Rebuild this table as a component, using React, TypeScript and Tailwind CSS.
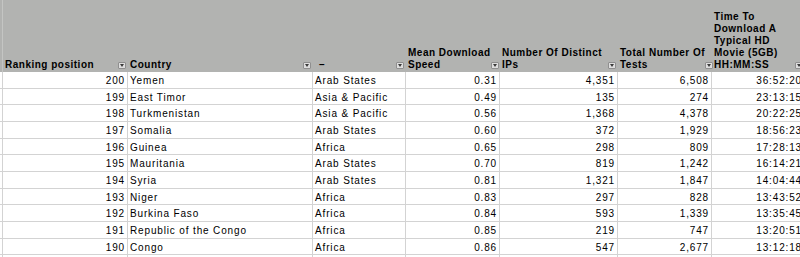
import type { ReactNode } from 'react'

type Row = [string, string, string, string, string, string, string]

const rows: Row[] = [
  ['200', 'Yemen', 'Arab States', '0.31', '4,351', '6,508', '36:52:20'],
  ['199', 'East Timor', 'Asia & Pacific', '0.49', '135', '274', '23:13:15'],
  ['198', 'Turkmenistan', 'Asia & Pacific', '0.56', '1,368', '4,378', '20:22:25'],
  ['197', 'Somalia', 'Arab States', '0.60', '372', '1,929', '18:56:23'],
  ['196', 'Guinea', 'Africa', '0.65', '298', '809', '17:28:13'],
  ['195', 'Mauritania', 'Arab States', '0.70', '819', '1,242', '16:14:21'],
  ['194', 'Syria', 'Arab States', '0.81', '1,321', '1,847', '14:04:44'],
  ['193', 'Niger', 'Africa', '0.83', '297', '828', '13:43:52'],
  ['192', 'Burkina Faso', 'Africa', '0.84', '593', '1,339', '13:35:45'],
  ['191', 'Republic of the Congo', 'Africa', '0.85', '219', '747', '13:20:51'],
  ['190', 'Congo', 'Africa', '0.86', '547', '2,677', '13:12:18'],
]

// column widths (border included)
const widths = ['w-[125px]', 'w-[185px]', 'w-[93px]', 'w-[94px]', 'w-[118px]', 'w-[94px]', 'w-[93px]']
const numeric = [true, false, false, true, true, true, true]

const FilterButton = () => (
  <div className="mb-[3px] mr-[2px] flex h-[7px] w-[8px] shrink-0 items-center justify-center rounded-[1px] border border-[#8f8f8f] bg-[#dedede]">
    <svg width="4" height="3" viewBox="0 0 4 3">
      <path d="M0 0h4L2 3z" fill="#3a3a3a" />
    </svg>
  </div>
)

const HeadCell = ({ width, children }: { width: string; children: ReactNode }) => (
  <div className={`flex shrink-0 items-end justify-between ${width}`}>
    <div className="whitespace-nowrap pb-[1px] pl-[2px] font-bold leading-[12px] tracking-[0.5px]">{children}</div>
    <FilterButton />
  </div>
)

export default function App() {
  return (
    <div className="h-[257px] w-[800px] overflow-hidden bg-white font-['Liberation_Sans',Arial,sans-serif] text-[10px] text-black">
      <div className="flex h-[72px] w-[805px] bg-[#b2b3b1]">
        <div className="w-[3px] shrink-0 border-r border-[#c4c5c3]" />
        <HeadCell width="w-[125px]">Ranking position</HeadCell>
        <HeadCell width="w-[185px]">Country</HeadCell>
        <HeadCell width="w-[93px]"><span className="ml-[4px]">–</span></HeadCell>
        <HeadCell width="w-[94px]">Mean Download<br />Speed</HeadCell>
        <HeadCell width="w-[118px]">Number Of Distinct<br />IPs</HeadCell>
        <HeadCell width="w-[94px]">Total Number Of<br />Tests</HeadCell>
        <HeadCell width="w-[93px]">Time To<br />Download A<br />Typical HD<br />Movie (5GB)<br />HH:MM:SS</HeadCell>
      </div>

      {rows.map((row) => (
        <div key={row[0]} className="flex h-[16.67px] w-[805px]">
          <div className="w-[3px] shrink-0 border-b border-r border-[#d3d3d3]" />
          {row.map((cell, i) => (
            <div
              key={i}
              className={`shrink-0 overflow-hidden whitespace-nowrap border-b border-r border-[#d3d3d3] pt-[1px] leading-[16px] tracking-[0.85px] ${widths[i]} ${numeric[i] ? 'pr-[2px] text-right' : 'pl-[2px] text-left'}`}
            >
              {cell}
            </div>
          ))}
        </div>
      ))}

      {/* partial row cut off at the bottom */}
      <div className="flex h-[16.67px] w-[805px]">
        <div className="w-[3px] shrink-0 border-r border-[#d3d3d3]" />
        {widths.map((w, i) => (
          <div key={i} className={`shrink-0 border-r border-[#d3d3d3] ${w}`} />
        ))}
      </div>
    </div>
  )
}
